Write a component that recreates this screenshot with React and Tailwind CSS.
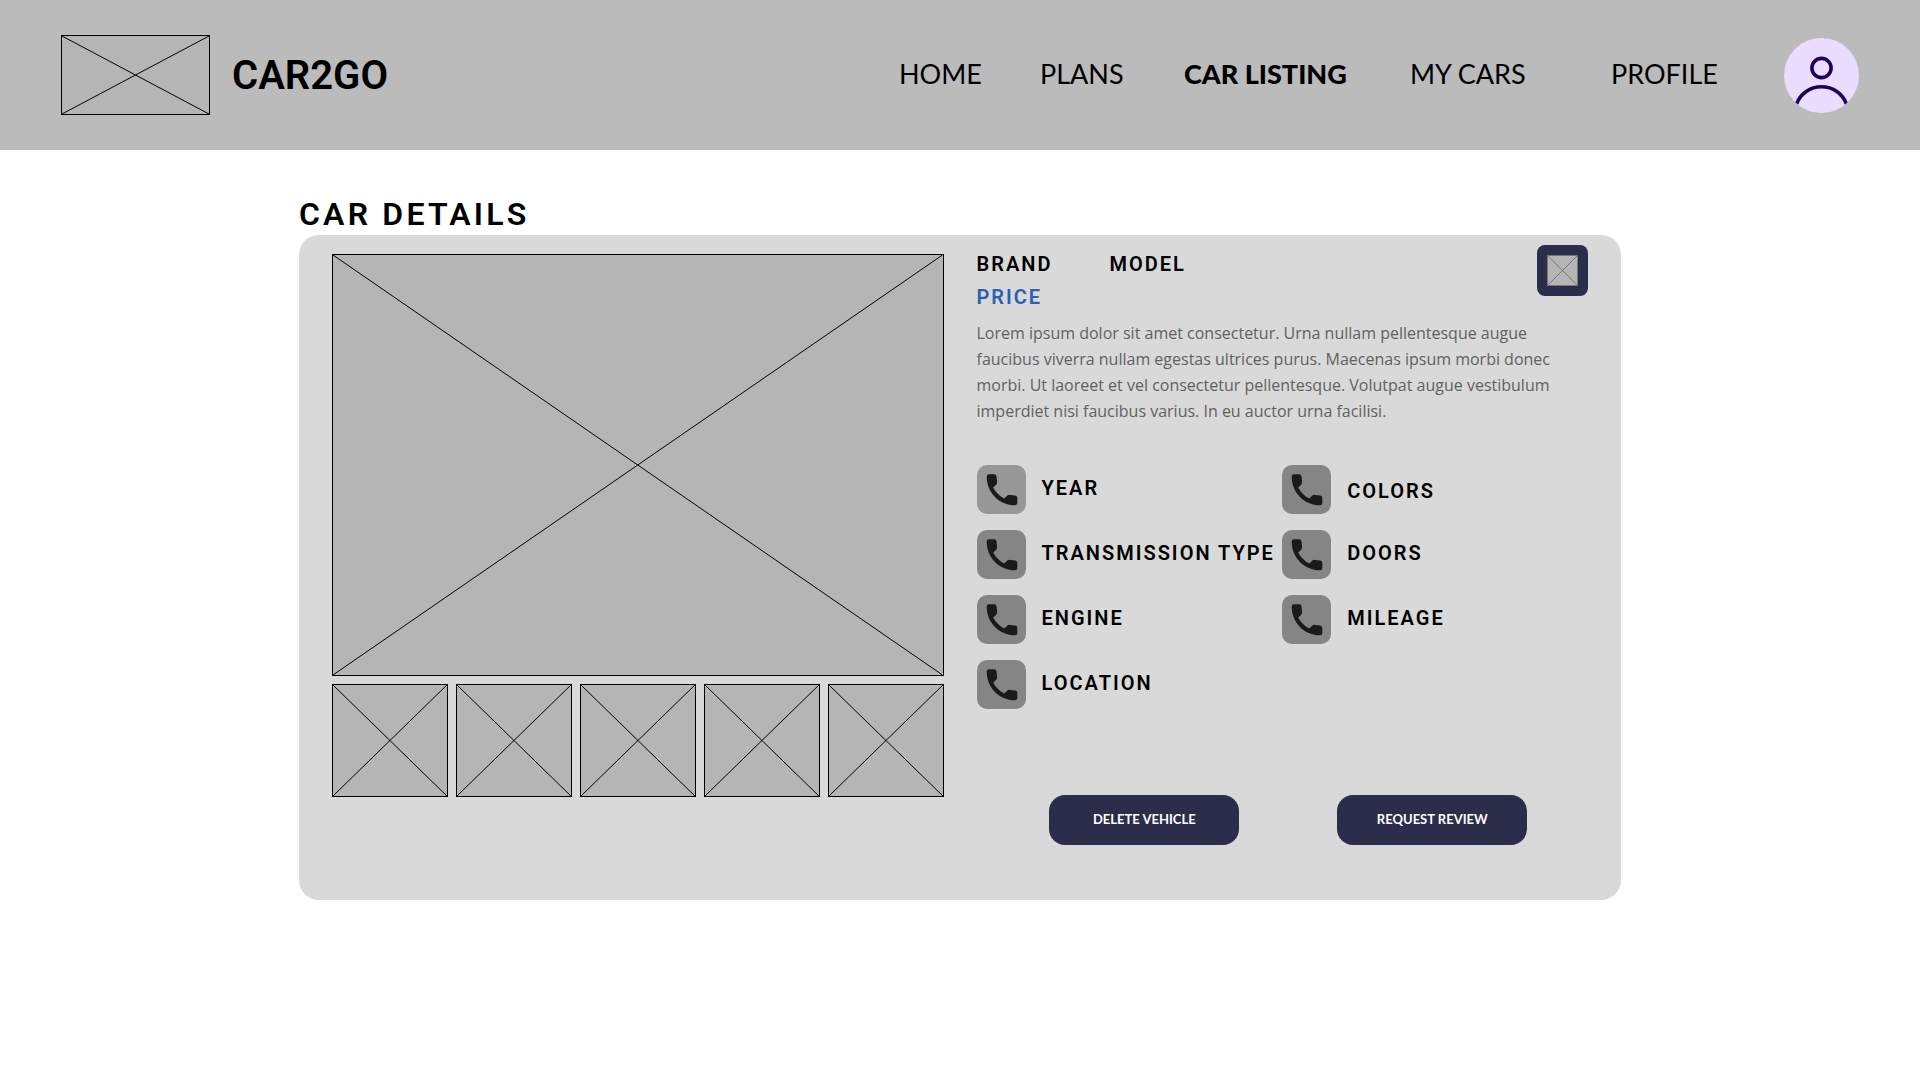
const FEATURES = [
  { label: "YEAR", tile: "bg-[#979797]", nudge: "pb-1" },
  { label: "COLORS", tile: "bg-[#858585]", nudge: "pt-0.5" },
  { label: "TRANSMISSION TYPE", tile: "bg-[#858585]", nudge: "pb-1" },
  { label: "DOORS", tile: "bg-[#858585]", nudge: "pb-1" },
  { label: "ENGINE", tile: "bg-[#858585]", nudge: "pb-1" },
  { label: "MILEAGE", tile: "bg-[#858585]", nudge: "pb-1" },
  { label: "LOCATION", tile: "bg-[#858585]", nudge: "pb-1" },
];

const NAV = [
  { label: "HOME", slot: "w-[141px]" },
  { label: "PLANS", slot: "w-36" },
  { label: "CAR LISTING", slot: "w-[226px]", current: true },
  { label: "MY CARS", slot: "w-[201px]" },
  { label: "PROFILE", slot: "w-[173px]" },
];

function Placeholder({ className, line = "text-black" }) {
  return (
    <div className={`border border-current bg-[#b5b5b5] ${line} ${className}`}>
      <svg className="block size-full" viewBox="0 0 100 100" preserveAspectRatio="none" aria-hidden="true">
        <path d="M0 0 100 100M100 0 0 100" fill="none" stroke="currentColor" strokeWidth="1" vectorEffect="non-scaling-stroke" />
      </svg>
    </div>
  );
}

function PhoneIcon() {
  return (
    <svg viewBox="0 0 49 49" className="size-[49px]" fill="#1a1a1a" aria-hidden="true">
      <path d="M12 9.2H17.200Q19.200 9.200 19.500 11.200L20.100 16.800Q20.300 18.600 19 19.900L16.200 22.500C18.700 27.300 22.400 31 27.200 33.500L29.900 31Q31.200 29.700 33 29.900L38.200 30.500Q40.300 30.800 40.300 32.800V38Q40.300 40.300 38 40.300C22.500 40.300 9.700 28 9.700 11.500Q9.700 9.200 12 9.200Z" />
    </svg>
  );
}

function Header() {
  return (
    <header className="flex h-[150px] items-center justify-between bg-[#bbbbbb] px-[61px]">
      <a href="#" className="flex items-center gap-[22px]">
        <Placeholder className="h-20 w-[149px]" />
        <span className="pt-0.5 font-['Roboto',sans-serif] text-[40px] leading-none font-semibold">CAR2GO</span>
      </a>
      <div className="flex items-center">
        <nav className="flex pb-0.5 font-['Lato',sans-serif] text-[27px] leading-8">
          {NAV.map((n) => (
            <div key={n.label} className={`shrink-0 whitespace-nowrap ${n.slot}`}>
              <a href="#" aria-current={n.current ? "page" : undefined} className={n.current ? "font-black" : ""}>
                {n.label}
              </a>
            </div>
          ))}
        </nav>
        <button type="button" aria-label="Account" className="size-[75px] overflow-hidden rounded-full bg-[#eaddff]">
          <svg viewBox="0 0 75 75" className="size-full" fill="none" stroke="#21005d" strokeWidth="3.6" aria-hidden="true">
            <circle cx="37.5" cy="30" r="9.6" />
            <path d="M12.5 66C16.500 55.500 26 48.800 37.500 48.800S58.500 55.500 62.500 66" />
          </svg>
        </button>
      </div>
    </header>
  );
}

export default function App() {
  return (
    <div className="min-h-screen bg-white text-black">
      <Header />
      <main className="mx-auto max-w-[1322px] pt-11">
        <h1 className="font-['Roboto',sans-serif] text-[32px] leading-[41px] font-semibold tracking-widest">CAR DETAILS</h1>
        <section className="grid grid-cols-2 gap-[33px] rounded-[20px] bg-[#d9d9d9] px-[33px] pb-[55px]">
          <div className="flex flex-col gap-2 pt-[19px]">
            <Placeholder className="h-[422px]" />
            <div className="grid grid-cols-5 gap-2">
              {[1, 2, 3, 4, 5].map((n) => (
                <Placeholder key={n} className="h-[113px]" />
              ))}
            </div>
          </div>
          <div className="pt-2.5 font-['Roboto',sans-serif] font-semibold">
            <div className="flex items-start justify-between">
              <div className="pt-[3px] text-xl leading-[33px] tracking-widest">
                <h2 className="flex">
                  <span className="w-[133px]">BRAND</span>
                  <span>MODEL</span>
                </h2>
                <p className="text-[#2b5fb4]">PRICE</p>
              </div>
              <button type="button" aria-label="Edit photo" className="rounded-lg bg-[#2b2d4b] p-2.5">
                <Placeholder className="size-[31px]" line="text-[#777777]" />
              </button>
            </div>
            <p className="mt-1.5 font-['Open_Sans',sans-serif] text-base leading-[26px] font-normal text-[#616161]">
              Lorem ipsum dolor sit amet consectetur. Urna nullam pellentesque augue faucibus viverra nullam egestas
              ultrices purus. Maecenas ipsum morbi donec morbi. Ut laoreet et vel consectetur pellentesque. Volutpat
              augue vestibulum imperdiet nisi faucibus varius. In eu auctor urna facilisi.
            </p>
            <ul className="mt-[41px] grid grid-cols-2 gap-y-4">
              {FEATURES.map((f) => (
                <li key={f.label} className="flex items-center gap-4 text-xl leading-6 tracking-widest whitespace-nowrap">
                  <span className={`shrink-0 rounded-[10px] ${f.tile}`}>
                    <PhoneIcon />
                  </span>
                  <span className={f.nudge}>{f.label}</span>
                </li>
              ))}
            </ul>
            <div className="mt-[86px] flex justify-center gap-[98px] pl-3 font-['Lato',sans-serif] text-[13px] font-bold text-white">
              <button type="button" className="h-[50px] w-[190px] rounded-2xl bg-[#2b2d4b]">DELETE VEHICLE</button>
              <button type="button" className="h-[50px] w-[190px] rounded-2xl bg-[#2b2d4b]">REQUEST REVIEW</button>
            </div>
          </div>
        </section>
      </main>
    </div>
  );
}
